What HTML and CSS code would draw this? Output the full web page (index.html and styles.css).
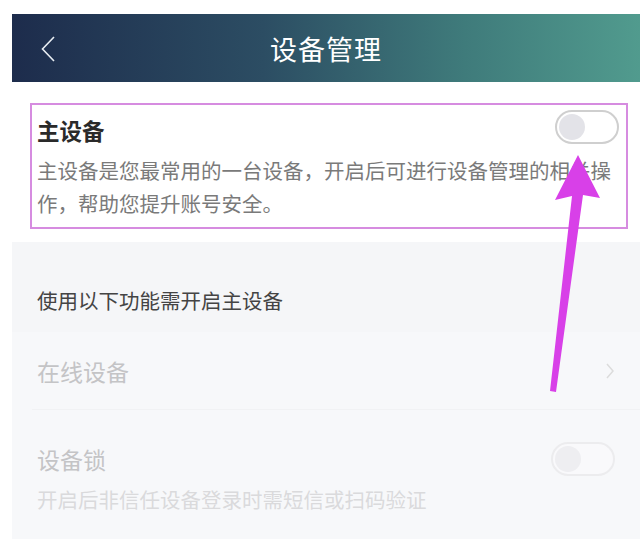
FILE: index.html
```html
<!DOCTYPE html>
<html lang="zh-CN">
<head>
  <meta charset="UTF-8">
  <title>设备管理</title>
  <link rel="stylesheet" href="styles.css">
</head>
<body>
  <div class="page">
    <!-- 顶部导航 -->
    <div class="header">
      <svg class="header__back" width="16" height="26" viewBox="0 0 16 26">
        <path d="M14 1 L2.5 13 L14 25" fill="none" stroke="#e8edf2" stroke-width="1.6"/>
      </svg>
      <div class="header__title">设备管理</div>
    </div>

    <!-- 主设备 -->
    <div class="primary">
      <div class="primary__box">
        <div class="primary__row">
          <div class="primary__title">主设备</div>
          <div class="switch"><span class="switch__knob"></span></div>
        </div>
        <div class="primary__desc">主设备是您最常用的一台设备，开启后可进行设备管理的相关操作，帮助您提升账号安全。</div>
      </div>
    </div>

    <!-- 需开启主设备的功能 -->
    <div class="features">
      <div class="features__label">使用以下功能需开启主设备</div>
      <div class="item item--link">
        <div class="item__title">在线设备</div>
        <svg class="item__arrow" width="10" height="18" viewBox="0 0 10 18">
          <path d="M2 2 L8 9 L2 16" fill="none" stroke="#dcdcdc" stroke-width="1.5"/>
        </svg>
      </div>
      <div class="item item--lock">
        <div class="item__row">
          <div class="item__title">设备锁</div>
          <div class="switch switch--off"><span class="switch__knob"></span></div>
        </div>
        <div class="item__desc">开启后非信任设备登录时需短信或扫码验证</div>
      </div>
    </div>
  </div>

  <!-- 标注箭头 -->
  <svg class="pointer" width="640" height="543" viewBox="0 0 640 543">
    <polygon points="578,155 600,198 583,195 556,392 550,391 572,196 555,200" fill="#d840e8"/>
  </svg>
</body>
</html>
```
FILE: styles.css
```css
body {
  margin: 0;
  background: #fff;
  font-family: "Noto Sans CJK SC", "Noto Sans", sans-serif;
  overflow: hidden;
}

.page {
  padding: 14px 0 6px 12px;
}

.header {
  position: relative;
  display: flex;
  align-items: center;
  justify-content: center;
  height: 68px;
  background: linear-gradient(90deg, #1d2c4c 0%, #2c4d63 40%, #3f7b7b 72%, #519b8e 100%);
}

.header__back {
  position: absolute;
  left: 28px;
  top: 22px;
}

.header__title {
  color: #fff;
  font-size: 27px;
  letter-spacing: 1px;
}

.primary {
  padding: 21px 12px 13px 18px;
  background: #fff;
}

.primary__box {
  border: 2px solid #d68ce0;
  padding: 3px 6px 7px 5px;
}

.primary__row {
  display: flex;
  align-items: center;
  justify-content: space-between;
  height: 38px;
}

.primary__title {
  margin-top: 6px;
  font-size: 22.5px;
  font-weight: 700;
  color: #2a2a2a;
}

.primary__desc {
  margin-top: 8px;
  width: 585px;
  font-size: 20.5px;
  line-height: 33px;
  color: #7a7a7a;
}

.switch {
  width: 64px;
  height: 34px;
  border: 2px solid #cfcfcf;
  border-radius: 17px;
  background: #fff;
  display: flex;
  align-items: center;
  padding-left: 2px;
  box-sizing: border-box;
  margin-right: 1px;
}

.switch__knob {
  width: 26px;
  height: 26px;
  border-radius: 50%;
  background: #e3e3e8;
}

.switch--off {
  border-color: #ececee;
  background: #f9f9fb;
  margin-right: 0;
}

.switch--off .switch__knob {
  background: #eeeef1;
}

.features {
  background: #f7f8fa;
}

.features__label {
  height: 90px;
  box-sizing: border-box;
  padding: 43px 0 0 25px;
  font-size: 20.5px;
  line-height: 30px;
  color: #444;
  background: #f5f6f8;
}

.item {
  padding: 0 26px 0 25px;
}

.item--link {
  display: flex;
  align-items: center;
  justify-content: space-between;
  height: 77px;
  padding-right: 25px;
}

.item--lock {
  border-top: 1px solid #f1f2f4;
  margin-left: 20px;
  padding-left: 5px;
  padding-right: 25px;
  padding-top: 33px;
  padding-bottom: 25px;
}

.item__row {
  display: flex;
  align-items: center;
  justify-content: space-between;
  height: 32px;
}

.item__title {
  font-size: 23px;
  color: #c4c4c6;
}

.item__desc {
  margin-top: 9px;
  font-size: 20.5px;
  line-height: 30px;
  color: #dadadc;
}

.pointer {
  position: absolute;
  left: 0;
  top: 0;
  pointer-events: none;
}
```
